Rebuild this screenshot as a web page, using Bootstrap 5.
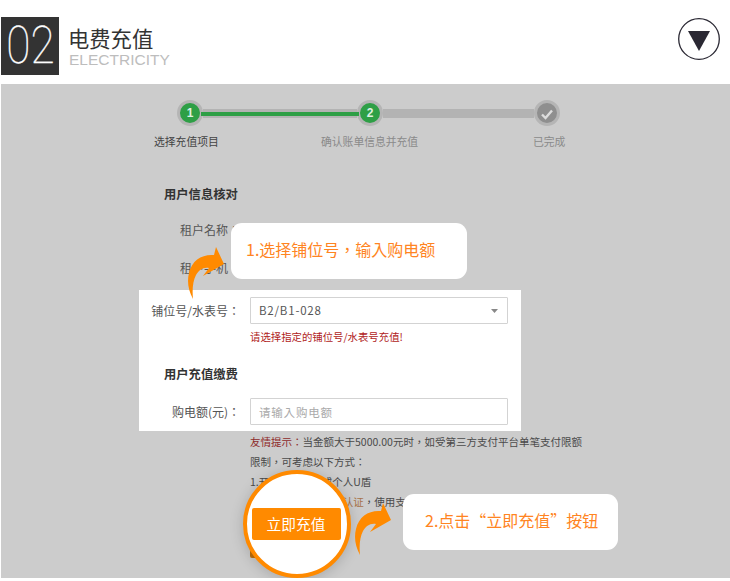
<!DOCTYPE html>
<html lang="zh-Hant">

<head>
    <meta charset="UTF-8">
    <title>电费充值</title>
    <meta name="viewport" content="width=device-width, initial-scale=1.0">
    <link href="https://cdn.jsdelivr.net/npm/bootstrap@5.3.0/dist/css/bootstrap.min.css" rel="stylesheet">
    <style>
        body {
            font-family: "Noto Sans CJK TC", sans-serif;
            background: #fff;
            overflow: hidden;
            color: #333;
        }

        .page-head {
            height: 84px;
            padding: 17px 10px 0 1px;
        }

        .num-box {
            width: 58px;
            height: 58px;
            background: #333;
            color: #fff;
            font: 100 52px/58px "Roboto", "Liberation Sans", sans-serif;
            text-align: center;
            -webkit-text-stroke: .3px #fff;
        }

        .num-box span {
            display: inline-block;
            transform: scaleX(.85);
        }

        .head-title {
            font-size: 21.3px;
            line-height: 26px;
            margin: 8px 0 0 9px;
            color: #333;
        }

        .head-sub {
            font: 300 15.5px/17px "Liberation Sans", sans-serif;
            color: #bdbdbd;
            margin-left: 10px;
        }

        .toggle-ico {
            margin-top: 1px;
        }

        .panel-dim {
            position: relative;
            height: 494px;
            margin-left: 1px;
            background: #ccc;
            font-size: 10.5px;
            color: #4a4a4a;
        }

        .step-bar {
            padding: 16px 0 0 176px;
        }

        .step-dot {
            width: 26px;
            height: 26px;
            flex: none;
            border-radius: 50%;
            border: 3px solid #b5b5b5;
            background: #2e9f46;
            color: #dff0e2;
            font: 700 12px/20px "Liberation Sans", sans-serif;
            text-align: center;
        }

        .step-off {
            background: #8f8f8f;
        }

        .step-track {
            height: 9px;
            background: #b3b3b3;
            position: relative;
        }

        .step-track.w1 {
            width: 154px;
        }

        .step-track.w2 {
            width: 151px;
        }

        .step-track.on::after {
            content: "";
            position: absolute;
            left: -2px;
            right: -2px;
            top: 3px;
            height: 4px;
            background: #2e9f46;
        }

        .step-names {
            padding: 7px 0 0 153px;
            line-height: 16px;
            font-size: 10.8px;
        }

        .step-names span:nth-child(1) {
            width: 167px;
            color: #444;
        }

        .step-names span:nth-child(2) {
            width: 212px;
            color: #8a8a8a;
        }

        .step-names span:nth-child(3) {
            color: #8a8a8a;
        }

        .form-title {
            margin: 37px 0 0 163px;
            font-size: 12.3px;
            font-weight: 700;
            line-height: 16px;
            color: #333;
        }

        .form-title.in-band {
            margin: 21px 0 0 25px;
        }

        .field-row {
            height: 27px;
        }

        .row-name {
            margin-top: 14px;
        }

        .row-phone {
            margin-top: 11px;
        }

        .row-amount {
            margin-top: 16px;
        }

        .field-name {
            width: 239px;
            text-align: right;
            font-size: 12px;
            line-height: 27px;
            color: #555;
            flex: none;
        }

        .focus-band {
            margin-left: 138px;
            width: 382px;
            height: 141px;
            background: #fff;
            margin-top: 9px;
            padding-top: 7px;
        }

        .focus-band .field-name {
            width: 111px;
            padding-right: 10px;
        }

        .focus-band .form-control,
        .focus-band .form-select {
            width: 258px;
            height: 27px;
            padding: 0 8px;
            border: 1px solid #d3d3d3;
            border-radius: 1px;
            font-size: 11.5px;
            color: #555;
            letter-spacing: .8px;
        }

        .focus-band .form-select {
            background-image: url("data:image/svg+xml,%3csvg xmlns='http://www.w3.org/2000/svg' viewBox='0 0 9 5'%3e%3cpath fill='%23888' d='M0 0h9L4.5 5z'/%3e%3c/svg%3e");
            background-size: 7px 4px;
            background-position: right 9px center;
        }

        .focus-band .form-control::placeholder {
            color: #aaa;
        }

        .err-note {
            margin: 5px 0 0 111px;
            font-size: 10.4px;
            line-height: 16px;
            color: #b01c22;
        }

        .tip-box {
            margin: 1px 0 0 249px;
            width: 340px;
            line-height: 20px;
        }

        .tip-red {
            color: #8e2a2a;
        }

        .tip-orange {
            color: #a8734a;
        }

        .pay-behind {
            width: 88px;
            height: 46px;
            border-radius: 2px;
            background: #bd6f0e;
        }

        .hint-bubble {
            position: absolute;
            background: #fff;
            border-radius: 11px;
            height: 56px;
            line-height: 53px;
            font-size: 16px;
            color: #ff8422;
            white-space: nowrap;
        }

        .hint-one {
            left: 230px;
            top: 139px;
            width: 236px;
            padding-left: 15px;
        }

        .hint-two {
            left: 402px;
            top: 410px;
            width: 215px;
            padding-left: 22px;
        }

        .hint-arrow {
            position: absolute;
            width: 40px;
            height: 56px;
        }

        .arrow-one {
            left: 186px;
            top: 161px;
        }

        .arrow-two {
            left: 353px;
            top: 417px;
        }

        .zoom-ring {
            position: absolute;
            left: 242px;
            top: 386px;
            width: 108px;
            height: 108px;
            border-radius: 50%;
            border: 4px solid #ff8a00;
            background: #fff;
            box-shadow: 0 2px 14px rgba(0, 0, 0, .18);
        }

        .zoom-ring .btn {
            width: 89px;
            height: 32px;
            margin-right: 2px;
            padding: 0;
            border: 0;
            border-radius: 2px;
            background: #ff8a00;
            color: #fff;
            font-size: 14.7px;
            line-height: 32px;
        }
    </style>
</head>

<body>

    <div class="page-head d-flex justify-content-between">
        <div class="d-flex">
            <div class="num-box"><span>02</span></div>
            <div>
                <div class="head-title">电费充值</div>
                <div class="head-sub">ELECTRICITY</div>
            </div>
        </div>
        <svg class="toggle-ico" width="42" height="42" viewBox="0 0 42 42">
            <circle cx="21" cy="21" r="20.3" fill="none" stroke="#2a2833" stroke-width="1.3"/>
            <path d="M10 13h22L21 33z" fill="#2a2833"/>
        </svg>
    </div>

    <div class="panel-dim">
        <div class="step-bar d-flex align-items-center">
            <div class="step-dot">1</div>
            <div class="step-track w1 on"></div>
            <div class="step-dot">2</div>
            <div class="step-track w2"></div>
            <div class="step-dot step-off">
                <svg width="12" height="20" viewBox="0 0 12 20">
                    <path d="M1 10.5l3.5 3.5L11 6.5" fill="none" stroke="#ddd" stroke-width="2.4"/>
                </svg>
            </div>
        </div>
        <div class="step-names d-flex">
            <span>选择充值项目</span>
            <span>确认账单信息并充值</span>
            <span>已完成</span>
        </div>

        <div class="form-title">用户信息核对</div>
        <div class="field-row row-name d-flex">
            <div class="field-name">租户名称：</div>
        </div>
        <div class="field-row row-phone d-flex">
            <div class="field-name">租户手机：</div>
        </div>

        <div class="focus-band">
            <div class="field-row d-flex">
                <div class="field-name">铺位号/水表号：</div>
                <select class="form-select">
                    <option>B2/B1-028</option>
                </select>
            </div>
            <div class="err-note">请选择指定的铺位号/水表号充值!</div>
            <div class="form-title in-band">用户充值缴费</div>
            <div class="field-row row-amount d-flex">
                <div class="field-name">购电额(元)：</div>
                <input type="text" class="form-control" placeholder="请输入购电额">
            </div>
        </div>

        <div class="tip-box">
            <div><span class="tip-red">友情提示：</span>当金额大于5000.00元时，如受第三方支付平台单笔支付限额</div>
            <div>限制，可考虑以下方式：</div>
            <div>1.开通网银大额或个人U盾</div>
            <div>2.完成支付宝实名制<span class="tip-orange">认证</span>，使用支付宝</div>
            <div class="pay-behind"></div>
        </div>

        <div class="hint-bubble hint-one">1.选择铺位号，输入购电额</div>
        <svg class="hint-arrow arrow-one" viewBox="0 0 40 56">
            <path d="M6 54C1 45 0 36 2 28 5 15 15 9 27 10L29 2 37 19 16 31 22 23C16 22 12 25 9 30 6 36 5 44 6 54Z" fill="#ff8a00"/>
        </svg>

        <div class="zoom-ring d-flex align-items-center justify-content-center">
            <button type="button" class="btn">立即充值</button>
        </div>

        <div class="hint-bubble hint-two">2.点击“立即充值”按钮</div>
        <svg class="hint-arrow arrow-two" viewBox="0 0 40 56">
            <path d="M6 54C1 45 0 36 2 28 5 15 15 9 27 10L29 2 37 19 16 31 22 23C16 22 12 25 9 30 6 36 5 44 6 54Z" fill="#ff8a00"/>
        </svg>
    </div>

    <script src="https://cdn.jsdelivr.net/npm/bootstrap@5.3.0/dist/js/bootstrap.bundle.min.js"></script>
</body>

</html>
